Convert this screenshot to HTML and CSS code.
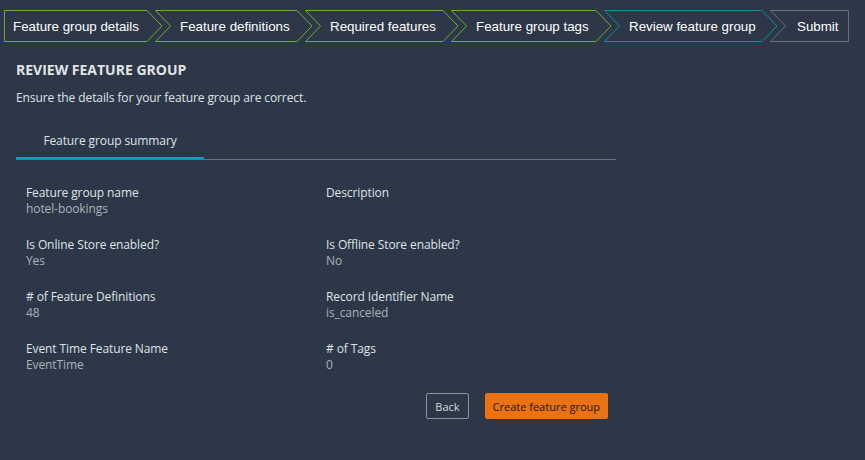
FILE: index.html
```html
<!DOCTYPE html>
<html>

<head>
    <title>Review feature group</title>
    <link rel="stylesheet" href="styles.css">
</head>

<body>
    <div class="steps">
        <div class="step step-done" style="width: 159px">
            <svg class="step-shape" width="159" height="32"><polygon points="0.5,0.5 143,0.5 158,16 143,31.5 0.5,31.5"/></svg>
            <span class="step-first">Feature group details</span>
        </div>
        <div class="step step-done" style="width: 158px">
            <svg class="step-shape" width="158" height="32"><polygon points="0.5,0.5 142,0.5 157,16 142,31.5 0.5,31.5 15.5,16"/></svg>
            <span>Feature definitions</span>
        </div>
        <div class="step step-done" style="width: 154px">
            <svg class="step-shape" width="154" height="32"><polygon points="0.5,0.5 138,0.5 153,16 138,31.5 0.5,31.5 15.5,16"/></svg>
            <span>Required features</span>
        </div>
        <div class="step step-done" style="width: 161px">
            <svg class="step-shape" width="161" height="32"><polygon points="0.5,0.5 145,0.5 160,16 145,31.5 0.5,31.5 15.5,16"/></svg>
            <span>Feature group tags</span>
        </div>
        <div class="step step-current" style="width: 174px">
            <svg class="step-shape" width="174" height="32"><polygon points="0.5,0.5 158,0.5 173,16 158,31.5 0.5,31.5 15.5,16"/></svg>
            <span>Review feature group</span>
        </div>
        <div class="step step-next" style="width: 79px">
            <svg class="step-shape" width="79" height="32"><polygon points="0.5,0.5 78.5,0.5 78.5,31.5 0.5,31.5 15.5,16"/></svg>
            <span class="step-last">Submit</span>
        </div>
    </div>

    <div class="content">
        <h1>REVIEW FEATURE GROUP</h1>
        <p class="intro">Ensure the details for your feature group are correct.</p>

        <div class="tabs">
            <div class="tab tab-active">Feature group summary</div>
        </div>

        <div class="summary">
            <div class="field">
                <div class="field-label">Feature group name</div>
                <div class="field-value">hotel-bookings</div>
            </div>
            <div class="field">
                <div class="field-label">Description</div>
                <div class="field-value"></div>
            </div>
            <div class="field">
                <div class="field-label">Is Online Store enabled?</div>
                <div class="field-value">Yes</div>
            </div>
            <div class="field">
                <div class="field-label">Is Offline Store enabled?</div>
                <div class="field-value">No</div>
            </div>
            <div class="field">
                <div class="field-label"># of Feature Definitions</div>
                <div class="field-value">48</div>
            </div>
            <div class="field">
                <div class="field-label">Record Identifier Name</div>
                <div class="field-value">is_canceled</div>
            </div>
            <div class="field">
                <div class="field-label">Event Time Feature Name</div>
                <div class="field-value">EventTime</div>
            </div>
            <div class="field">
                <div class="field-label"># of Tags</div>
                <div class="field-value">0</div>
            </div>
        </div>

        <div class="actions">
            <button class="btn btn-back" type="button">Back</button>
            <button class="btn btn-primary" type="button">Create feature group</button>
        </div>
    </div>
</body>

</html>
```

FILE: styles.css
```css
body {
    font-family: "Open Sans", Arial, sans-serif;
    font-size: 12px;
    background-color: #2d3748;
    color: #dfe3e5;
    margin: 0;
}

/* wizard steps */
.steps {
    display: flex;
    padding: 10px 0 0 4px;
}

.step {
    position: relative;
    display: flex;
    align-items: center;
    height: 32px;
    margin-right: -8px;
    font-family: "Liberation Sans", Arial, sans-serif;
    font-size: 10pt;
    color: #fff;
}

.step span {
    position: relative;
    padding-left: 25px;
    white-space: nowrap;
}

.step .step-first {
    padding-left: 9px;
}

.step .step-last {
    padding-left: 27px;
}

.step-shape {
    position: absolute;
    top: 0;
    left: 0;
}

.step-shape polygon {
    fill: none;
    stroke-width: 1;
}

.step-done polygon {
    stroke: #6aaf35;
}

.step-current polygon {
    stroke: #0f8fa3;
}

.step-next polygon {
    stroke: #687078;
}

/* page body */
.content {
    width: 600px;
    padding-left: 16px;
    letter-spacing: -0.1px;
}

h1 {
    font-size: 14px;
    line-height: 20px;
    font-weight: bold;
    color: #e1e4e6;
    letter-spacing: 0;
    margin: 18px 0 0;
}

.intro {
    line-height: 18px;
    font-weight: 500;
    margin: 9px 0 0;
}

.tabs {
    display: flex;
    margin-top: 25px;
    border-bottom: 1px solid #687078;
}

.tab {
    width: 188px;
    text-align: center;
    line-height: 18px;
    font-weight: 500;
    padding-bottom: 7px;
}

.tab-active {
    border-bottom: 2px solid #00a1c9;
}

.summary {
    display: grid;
    grid-template-columns: 300px 300px;
    row-gap: 20px;
    margin-top: 25px;
    padding-left: 10px;
}

.field-label,
.field-value {
    line-height: 16px;
    min-height: 16px;
    font-weight: 500;
}

.field-value {
    color: #aab3b8;
}

.actions {
    display: flex;
    justify-content: flex-end;
    gap: 16px;
    margin-top: 20px;
    padding-right: 8px;
}

.btn {
    height: 26px;
    font-family: "Open Sans", Arial, sans-serif;
    font-size: 11px;
    font-weight: 500;
    border-radius: 2px;
    padding: 0 8px;
}

.btn-back {
    background: transparent;
    border: 1px solid #879596;
    color: #d5dbdb;
}

.btn-primary {
    background: #ec7211;
    border: 1px solid #ec7211;
    color: #16191f;
    padding: 0 7px;
}
```
